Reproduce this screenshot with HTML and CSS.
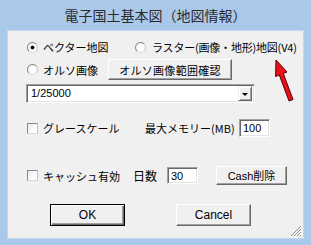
FILE: index.html
```html
<!DOCTYPE html>
<html lang="ja">
<head>
  <meta charset="UTF-8">
  <title>電子国土基本図（地図情報）</title>
  <link rel="stylesheet" href="styles.css">
</head>
<body>
  <div class="window">
    <div class="titlebar">電子国土基本図（地図情報）</div>

    <div class="client">
      <div class="row row-mode1">
        <label class="opt opt-vector"><span class="radio checked"></span>ベクター地図</label>
        <label class="opt"><span class="radio"></span><span class="raster-text">ラスター(画像・地形)地図(V4)</span></label>
      </div>

      <div class="row row-mode2">
        <label class="opt opt-ortho"><span class="radio"></span>オルソ画像</label>
        <button class="btn btn-range" type="button">オルソ画像範囲確認</button>
      </div>

      <div class="combo">
        <span class="combo-value">1/25000</span>
        <span class="combo-arrow"></span>
      </div>

      <div class="row row-gray">
        <label class="opt opt-gray"><span class="check"></span>グレースケール</label>
        <span class="field-label label-memory">最大メモリー(MB)</span>
        <span class="field field-memory">100</span>
      </div>

      <div class="row row-cache">
        <label class="opt opt-cache"><span class="check"></span>キャッシュ有効</label>
        <span class="field-label label-days">日数</span>
        <span class="field field-days">30</span>
        <button class="btn btn-clear" type="button">Cash削除</button>
      </div>

      <div class="row row-actions">
        <button class="btn btn-ok" type="button">OK</button>
        <button class="btn btn-cancel" type="button">Cancel</button>
      </div>

      <!-- サイズグリップ -->
      <svg class="grip" width="12" height="12" viewBox="0 0 12 12">
        <path d="M11 1 L1 11 M11 4 L4 11 M11 7 L7 11 M11 10 L10 11" stroke="#8a8a8a" stroke-width="1"/>
        <path d="M12 2 L2 12 M12 5 L5 12 M12 8 L8 12" stroke="#ffffff" stroke-width="1"/>
      </svg>
    </div>

    <!-- 赤い矢印 -->
    <svg class="arrow" width="311" height="245" viewBox="0 0 311 245">
      <polygon points="276,60 287,72 283.3,73.5 293,99.5 289,101 279.3,75 275.6,76.5"
               fill="#e8101a" stroke="#5a0000" stroke-width="1" stroke-linejoin="round"/>
    </svg>
  </div>
</body>
</html>
```

FILE: styles.css
```css
* {
  box-sizing: border-box;
}

body {
  margin: 0;
  font-family: "Noto Sans CJK JP", "Noto Sans", sans-serif;
  font-size: 11px;
  color: #000;
}

.window {
  position: relative;
  width: 311px;
  height: 245px;
  background: #aac9ea;
  overflow: hidden;
}

.titlebar {
  height: 30px;
  line-height: 30px;
  text-align: center;
  font-size: 14px;
  color: #2a2a2a;
}

.client {
  position: relative;
  margin-left: 7px;
  width: 297px;
  height: 209px;
  background: #f0f0f0;
  border: 1px solid #c4d7ec;
  padding-left: 19px;
}

.row {
  display: flex;
  align-items: center;
  line-height: 14px;
}

.row-mode1 { margin-top: 7px; height: 18px; }
.row-mode2 { margin-top: 3px; height: 21px; }
.row-gray { margin-top: 16px; height: 18px; }
.row-cache { margin-top: 29px; height: 19px; }
.row-actions { margin-top: 19px; height: 22px; padding-left: 23px; }

.opt {
  display: flex;
  align-items: center;
}

.opt-vector { width: 108px; }
.opt-ortho { width: 81px; }
.opt-gray { width: 118px; }
.opt-cache { width: 106px; }

.raster-text {
  margin-left: 1px;
  letter-spacing: -0.2px;
}

/* ラジオボタン */
.radio {
  width: 11px;
  height: 11px;
  margin-right: 5px;
  border-radius: 50%;
  border: 1px solid #9a9a9a;
  border-color: #7f7f7f #c8c8c8 #dcdcdc #8a8a8a;
  background: radial-gradient(circle at 60% 60%, #ffffff 40%, #e4e4e4 100%);
  position: relative;
  flex: none;
}

.radio.checked::after {
  content: "";
  position: absolute;
  left: 3px;
  top: 3px;
  width: 3px;
  height: 3px;
  border-radius: 50%;
  background: #000;
  box-shadow: 0 0 0 0.5px #333;
}

/* チェックボックス */
.check {
  width: 11px;
  height: 11px;
  margin-right: 5px;
  border: 1px solid #8e8f8f;
  border-color: #8a8a8a #c4c4c4 #d8d8d8 #8a8a8a;
  background: linear-gradient(135deg, #e8e8e8 0%, #ffffff 70%);
  flex: none;
}

/* ボタン */
.btn {
  font-family: inherit;
  font-size: 11px;
  line-height: 14px;
  color: #000;
  background: #f0f0f0;
  border: 1px solid;
  border-color: #ffffff #696969 #696969 #ffffff;
  box-shadow: inset -1px -1px 0 #a0a0a0;
  padding: 0;
  flex: none;
}

.btn-range {
  width: 124px;
  height: 21px;
  margin-left: 0;
  letter-spacing: 0.3px;
}

.btn-clear {
  width: 71px;
  height: 19px;
  margin-left: 18px;
  font-family: "Liberation Sans", "Noto Sans CJK JP", sans-serif;
}

.btn-ok,
.btn-cancel {
  width: 75px;
  height: 22px;
  font-family: "Liberation Sans", sans-serif;
  font-size: 12px;
}

.btn-ok {
  border: 1px solid #000;
  box-shadow: inset 1px 1px 0 #ffffff, inset -1px -1px 0 #696969, inset -2px -2px 0 #a0a0a0;
}

.btn-cancel {
  margin-left: 51px;
}

/* コンボボックス */
.combo {
  margin-top: 4px;
  margin-left: -1px;
  width: 229px;
  height: 19px;
  display: flex;
  align-items: center;
  justify-content: space-between;
  background: #fff;
  border: 1px solid;
  border-color: #a0a0a0 #ffffff #ffffff #a0a0a0;
  box-shadow: inset 1px 1px 0 #696969, inset -1px -1px 0 #e3e3e3;
  padding: 2px 2px 2px 4px;
}

.combo-value {
  font-family: "Liberation Sans", sans-serif;
  font-size: 11px;
  line-height: 13px;
}

.combo-arrow {
  width: 14px;
  height: 15px;
  background: #f0f0f0;
  border: 1px solid;
  border-color: #f0f0f0 #696969 #696969 #f0f0f0;
  box-shadow: inset 1px 1px 0 #ffffff, inset -1px -1px 0 #a0a0a0;
  display: flex;
  align-items: center;
  justify-content: center;
}

.combo-arrow::after {
  content: "";
  border-left: 3px solid transparent;
  border-right: 3px solid transparent;
  border-top: 3px solid #000;
  margin-top: 1px;
}

/* テキスト入力 */
.field-label {
  flex: none;
}

.label-memory { width: 94px; }
.label-days { width: 34px; font-size: 12px; }

.field {
  flex: none;
  width: 31px;
  background: #fff;
  border: 1px solid;
  border-color: #a0a0a0 #ffffff #ffffff #a0a0a0;
  box-shadow: inset 1px 1px 0 #696969, inset -1px -1px 0 #e3e3e3;
  padding-left: 3px;
  font-family: "Liberation Sans", sans-serif;
  font-size: 11px;
  display: flex;
  align-items: center;
}

.field-memory { height: 18px; }
.field-days { height: 17px; }

.grip {
  position: absolute;
  right: 1px;
  bottom: 1px;
}

.arrow {
  position: absolute;
  left: 0;
  top: 0;
  pointer-events: none;
}
```
